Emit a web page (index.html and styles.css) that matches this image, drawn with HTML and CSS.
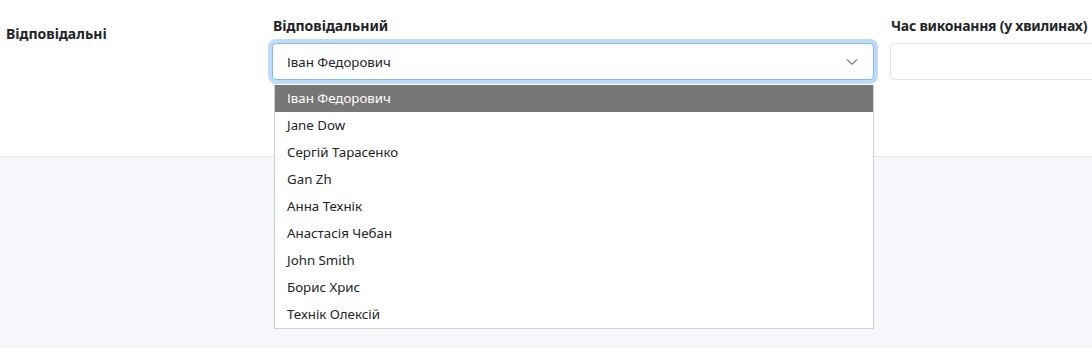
FILE: index.html
```html
<!DOCTYPE html>
<html lang="uk">
<head>
<meta charset="utf-8">
<link rel="stylesheet" href="styles.css">
</head>
<body>
<div class="page">
  <div class="panel">
    <div class="row">
      <div class="side-label">Відповідальні</div>
      <div class="field field-select">
        <label class="label">Відповідальний</label>
        <div class="select">
          <span class="select-value">Іван Федорович</span>
          <svg class="chevron" width="12" height="8" viewBox="0 0 12 8"><path d="M1 1.5 L6 6.2 L11 1.5" fill="none" stroke="#7b818a" stroke-width="1.3"/></svg>
        </div>
        <ul class="menu">
          <li class="opt active">Іван Федорович</li>
          <li class="opt">Jane Dow</li>
          <li class="opt">Сергій Тарасенко</li>
          <li class="opt">Gan Zh</li>
          <li class="opt">Анна Технік</li>
          <li class="opt">Анастасія Чебан</li>
          <li class="opt">John Smith</li>
          <li class="opt">Борис Хрис</li>
          <li class="opt">Технік Олексій</li>
        </ul>
      </div>
      <div class="field">
        <label class="label nowrap tight">Час виконання (у хвилинах)</label>
        <div class="input"></div>
      </div>
    </div>
  </div>
  <div class="rest"></div>
</div>
</body>
</html>
```

FILE: styles.css
```css
html, body {
  margin: 0;
  padding: 0;
  background: #f6f7fb;
  font-family: "Noto Sans", "Open Sans", sans-serif;
  font-size: 13.3px;
  color: #212529;
}
.page {
  min-height: 100vh;
  display: flex;
  flex-direction: column;
  overflow-x: clip;
}
.panel {
  position: relative;
  z-index: 2;
  background: #ffffff;
  height: 157px;
  border-bottom: 1px solid #e4e6ec;
  box-sizing: border-box;
}
.rest {
  flex: 1;
  position: relative;
  z-index: 1;
}
.row {
  display: grid;
  grid-template-columns: 250px 602px 1fr;
  column-gap: 16px;
  padding: 16px 0 0 6px;
}
.side-label {
  font-weight: 700;
  font-size: 14px;
  padding-top: 8px;
  line-height: 20px;
}
.field {
  position: relative;
  display: flex;
  flex-direction: column;
}
.label {
  font-weight: 700;
  font-size: 14px;
  line-height: 20px;
  margin-bottom: 7px;
  padding-left: 1px;
}
.nowrap {
  white-space: nowrap;
}
.tight {
  letter-spacing: -0.25px;
}
.select {
  height: 37px;
  box-sizing: border-box;
  border: 1px solid #86b7fe;
  border-radius: 4px;
  box-shadow: 0 0 0 4px #c2dbf5;
  display: flex;
  align-items: center;
  justify-content: space-between;
  padding: 0 15px 0 14px;
  background: #fff;
}
.chevron {
  display: block;
}
.input {
  height: 37px;
  box-sizing: border-box;
  border: 1px solid #dee2e6;
  border-radius: 4px;
  margin-right: -10px;
  background: #fff;
}
.menu {
  position: absolute;
  left: 2px;
  right: 0;
  top: 69px;
  margin: 0;
  padding: 0;
  list-style: none;
  background: #fff;
  border: 1px solid #cfd2d6;
  border-top: none;
  z-index: 5;
}
.opt {
  height: 27px;
  line-height: 27px;
  padding: 0 12px;
}
.opt.active {
  background: #777777;
  color: #ffffff;
}
```
